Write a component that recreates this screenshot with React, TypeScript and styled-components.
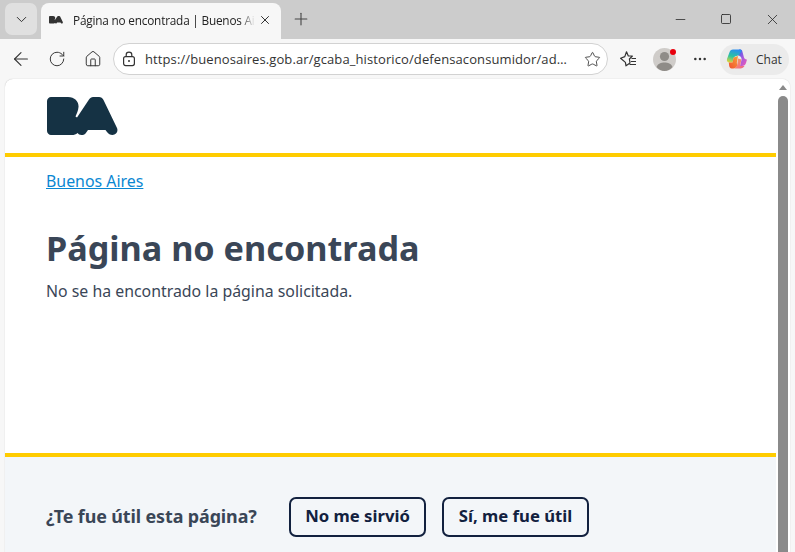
import React from "react";
import styled, { createGlobalStyle } from "styled-components";
import { ArrowLeft, RotateCw, Home, Star, ChevronDown, X, Plus, Minus, Square, Ellipsis } from "lucide-react";

const Global = createGlobalStyle`
  html, body { margin: 0; padding: 0; background: #f7f7f7; }
  * { box-sizing: border-box; }
`;
const Window = styled.div`
  width: 795px; height: 552px; overflow: hidden; display: flex; flex-direction: column;
  background: #f7f7f7; font-family: "Open Sans", "Noto Sans", sans-serif;
`;
const TabStrip = styled.div`
  height: 39px; flex: none; background: #cccccc; display: flex; align-items: flex-end; padding-left: 5px;
`;
const TabMenu = styled.div`
  width: 32px; height: 32px; margin-bottom: 4px; border-radius: 7px; background: #e0e0e0;
  display: flex; align-items: center; justify-content: center; color: #333; flex: none;
`;
const Tab = styled.div`
  width: 240px; height: 36px; margin-left: 4px; background: #f7f7f7; border-radius: 8px 8px 0 0;
  display: flex; align-items: center; padding: 0 9px 2px 8px; flex: none; color: #222;
`;
const TabTitle = styled.span`
  font-size: 11.8px; margin-left: 10px; width: 182px; margin-right: 3px; white-space: nowrap; overflow: hidden; flex: none;
  -webkit-mask-image: linear-gradient(to right, #000 92%, transparent 100%);
  mask-image: linear-gradient(to right, #000 92%, transparent 100%);
  letter-spacing: -0.2px;
`;
const NewTab = styled.div`
  width: 28px; height: 28px; margin: 0 0 6px 6px; display: flex; align-items: center; justify-content: center; color: #444;
`;
const WinControls = styled.div`
  margin-left: auto; height: 38px; align-self: flex-start; display: flex; align-items: center; color: #222;
`;
const WinBtn = styled.div`
  width: 46px; height: 38px; display: flex; align-items: center; justify-content: center;
`;
const Toolbar = styled.div`
  height: 40px; flex: none; background: #f7f7f7; display: flex; align-items: center; padding: 0 5px 0 3px; color: #333;
`;
const NavBtn = styled.div`
  width: 36px; height: 32px; display: flex; align-items: center; justify-content: center; flex: none;
`;
const Omnibox = styled.div`
  width: 495px; height: 32px; margin-left: 2px; border: 1px solid #d2d2d2; border-radius: 16px; background: #fff;
  display: flex; align-items: center; padding: 0 6px 0 8px; flex: none;
`;
const Url = styled.span`
  font-size: 13px; color: #333; margin-left: 9px; width: 428px; white-space: nowrap; overflow: hidden;
  text-overflow: ellipsis; flex: none; letter-spacing: 0.1px;
`;
const StarSlot = styled.span`
  margin-left: auto; display: flex; flex: none;
`;
const Avatar = styled.div`
  width: 23px; height: 23px; border-radius: 50%; background: #cfccc9; overflow: hidden;
`;
const AvatarWrap = styled.div`
  position: relative; width: 23px; height: 23px; margin-left: 7px; flex: none;
`;
const Badge = styled.span`
  position: absolute; top: 1px; right: 0; width: 6px; height: 6px; border-radius: 50%; background: #e8000d;
`;
const Dots = styled(NavBtn)`
  margin-left: 6px;
`;
const Favorites = styled(NavBtn)`
  margin-left: 2px;
`;
const ChatPill = styled.div`
  margin-left: 2px; width: 69px; height: 31px; border-radius: 16px; background: #ebebeb; display: flex; align-items: center;
  padding-left: 6px; gap: 8px; font-size: 12px; color: #333; flex: none;
`;
const Viewport = styled.div`
  flex: 1; min-height: 0; margin: 0 5px; background: #fff; border-radius: 8px 8px 0 0; display: flex; overflow: hidden;
  box-shadow: 0 0 1px rgba(0,0,0,.3);
`;
const Page = styled.div`
  flex: 1; min-width: 0; display: flex; flex-direction: column; color: #3a4657;
  font-family: "Noto Sans", "Open Sans", sans-serif;
`;
const Header = styled.header`
  height: 78px; flex: none; border-bottom: 4px solid #ffcc00; padding: 18px 0 0 42px;
`;
const Main = styled.main`
  height: 300px; flex: none; padding: 13px 41px 0; border-bottom: 4px solid #ffcc00;
`;
const Crumb = styled.a`
  font-size: 15.9px; line-height: 22px; color: #0a87d2; text-decoration: underline; display: inline-block;
`;
const Title = styled.h1`
  margin: 34px 0 0; font-size: 34.2px; line-height: 44px; font-weight: 700; color: #3a4657;
`;
const Text = styled.p`
  margin: 10px 0 0; font-size: 15.86px; line-height: 22px; color: #3a4657;
`;
const Footer = styled.footer`
  flex: 1; background: #f3f6f9; display: flex; align-items: flex-start; padding: 40px 0 0 41px;
`;
const Question = styled.span`
  font-size: 17.9px; font-weight: 700; line-height: 38px; color: #3a4657; width: 243px; flex: none; letter-spacing: -0.1px;
`;
const Vote = styled.button<{ $w: number }>`
  height: 40px; padding: 0 0 3px; width: ${(p) => p.$w}px; margin-right: 16px; background: transparent;
  border: 2px solid #12213f; border-radius: 7px; color: #12213f; font: 700 16.7px "Noto Sans", sans-serif; flex: none;
`;
const Scrollbar = styled.div`
  width: 14px; flex: none; background: #fff; display: flex; flex-direction: column; align-items: center; padding-top: 6px;
`;
const Arrow = styled.div`
  width: 0; height: 0; border-left: 4px solid transparent; border-right: 4px solid transparent; border-bottom: 5px solid #8a8a8a;
`;
const Thumb = styled.div`
  width: 10px; flex: 1; margin-top: 6px; background: #8a8a8a; border-radius: 5px 5px 0 0;
`;

const Logo = ({ w, color }: { w: number; color: string }) => (
  <svg width={w} viewBox="0 0 71 38" fill={color} style={{ display: "block" }}>
    <path d="M4 0H21C28 0 32 5 31.5 10C31.3 14 29.5 17 28.5 19.5L30 20.5L42 2.5C43 1 44.5 0 46 0H52C54 0 55.5 1 56.5 3L70 31C71.5 34.5 69 38 65.5 38C63 38 61.5 37 60 35L58.5 33H41L38.5 36.5C37.5 37.5 36 38 34.5 38C32.5 38 31.5 37 30.5 36C29 37.5 27 38 25 38H4C2 38 0 36 0 34V4C0 2 2 0 4 0Z" />
  </svg>
);

const LockIcon = () => (
  <svg width="14" height="16" viewBox="0 0 14 16" fill="none" stroke="#333" strokeWidth="1.2" style={{ flex: "none" }}>
    <rect x="1.6" y="5.6" width="10.8" height="9" rx="2" />
    <path d="M4.2 5.6V3.8C4.2 2.2 5.4 1.2 7 1.2C8.6 1.2 9.8 2.2 9.8 3.8V5.6" />
    <circle cx="7" cy="10" r="1" fill="#333" stroke="none" />
  </svg>
);

const FavoritesIcon = () => (
  <svg width="18" height="18" viewBox="0 0 18 18" fill="none" stroke="#333" strokeWidth="1.2" strokeLinejoin="round">
    <path d="M7.5 1.8L9.3 6H13.4L10.4 9L11 13L7 15.8L6.4 12.4L1.6 8.2L5.8 6.6Z" />
    <path d="M12.5 8.5H17M11.8 11.5H17M10.5 14.5H17" />
  </svg>
);

const Copilot = () => (
  <svg width="22" height="22" viewBox="0 0 22 22">
    <defs>
      <linearGradient id="cpa" x1="0.6" y1="0" x2="0.3" y2="1">
        <stop offset="0" stopColor="#2a8df0" />
        <stop offset="0.55" stopColor="#2bc4a0" />
        <stop offset="1" stopColor="#d8d43d" />
      </linearGradient>
      <linearGradient id="cpb" x1="0" y1="0" x2="0.8" y2="1">
        <stop offset="0" stopColor="#2f5fe8" />
        <stop offset="0.55" stopColor="#a45ae0" />
        <stop offset="1" stopColor="#e85ab8" />
      </linearGradient>
      <linearGradient id="cpc" x1="0" y1="1" x2="1" y2="0">
        <stop offset="0" stopColor="#f2502e" />
        <stop offset="1" stopColor="#f7a23a" />
      </linearGradient>
      <linearGradient id="cpd" x1="0" y1="0" x2="1" y2="1">
        <stop offset="0" stopColor="#f7a060" />
        <stop offset="1" stopColor="#f0608a" />
      </linearGradient>
    </defs>
    <path d="M13 1.5H14.5C15.5 1.5 16 2.4 16.3 3.2L18 9.5C18.4 11 20 11.5 21 11.5L20 15C19.5 17 18 18 16 18H14L15.5 12C16 10 14.5 7.5 12 7.5Z" fill="url(#cpb)" />
    <path d="M7 1.5H14C15 1.5 15.4 2.2 15.7 3L13 7L10.5 8C9 8.4 8 9 7.6 10L6.5 14.5H3.5C1.5 14.5 0.5 13 1 11L3.4 4.5C4 2.6 5.2 1.5 7 1.5Z" fill="url(#cpa)" />
    <path d="M7.6 9.5L12 8L10.8 15L11.4 17C11 19 9.2 20.5 7.2 20.5H5.6C4.2 20.5 3.6 19.4 3.2 18L2.8 14.5H6.5Z" fill="url(#cpc)" />
    <path d="M12 10.5L15.4 11.5C15 13.5 14.5 15.5 14 18H18.5C17.6 19.6 16.2 20.5 14.5 20.5H8.5C10 19.6 10.8 18.6 11.2 17Z" fill="url(#cpd)" />
  </svg>
);

export default function App() {
  return (
    <Window>
      <Global />
      <TabStrip>
        <TabMenu><ChevronDown size={17} strokeWidth={1.4} /></TabMenu>
        <Tab>
          <Logo w={16} color="#333" />
          <TabTitle>Página no encontrada | Buenos Aires</TabTitle>
          <X size={16} strokeWidth={1.6} />
        </Tab>
        <NewTab><Plus size={20} strokeWidth={1.3} /></NewTab>
        <WinControls>
          <WinBtn><Minus size={15} strokeWidth={1.2} /></WinBtn>
          <WinBtn><Square size={12} strokeWidth={1.6} /></WinBtn>
          <WinBtn><X size={17} strokeWidth={1.1} /></WinBtn>
        </WinControls>
      </TabStrip>
      <Toolbar>
        <NavBtn><ArrowLeft size={22} strokeWidth={1.2} /></NavBtn>
        <NavBtn><RotateCw size={18} strokeWidth={1.3} /></NavBtn>
        <NavBtn><Home size={18} strokeWidth={1.3} /></NavBtn>
        <Omnibox>
          <LockIcon />
          <Url>https://buenosaires.gob.ar/gcaba_historico/defensaconsumidor/administracion</Url>
          <StarSlot><Star size={17} strokeWidth={1.2} /></StarSlot>
        </Omnibox>
        <Favorites><FavoritesIcon /></Favorites>
        <AvatarWrap>
          <Avatar>
            <svg width="23" height="23" viewBox="0 0 23 23" fill="#8f8c88">
              <circle cx="11.5" cy="8.5" r="4.6" />
              <path d="M3.5 19C5 15.5 8 14.5 11.5 14.5C15 14.5 18 15.5 19.5 19C17.5 21.5 14.5 23 11.5 23C8.5 23 5.5 21.5 3.5 19Z" />
            </svg>
          </Avatar>
          <Badge />
        </AvatarWrap>
        <Dots><Ellipsis size={16} strokeWidth={1.8} /></Dots>
        <ChatPill><Copilot />Chat</ChatPill>
      </Toolbar>
      <Viewport>
        <Page>
          <Header><Logo w={71} color="#153244" /></Header>
          <Main>
            <Crumb>Buenos Aires</Crumb>
            <Title>Página no encontrada</Title>
            <Text>No se ha encontrado la página solicitada.</Text>
          </Main>
          <Footer>
            <Question>¿Te fue útil esta página?</Question>
            <Vote $w={137}>No me sirvió</Vote>
            <Vote $w={147}>Sí, me fue útil</Vote>
          </Footer>
        </Page>
        <Scrollbar><Arrow /><Thumb /></Scrollbar>
      </Viewport>
    </Window>
  );
}
